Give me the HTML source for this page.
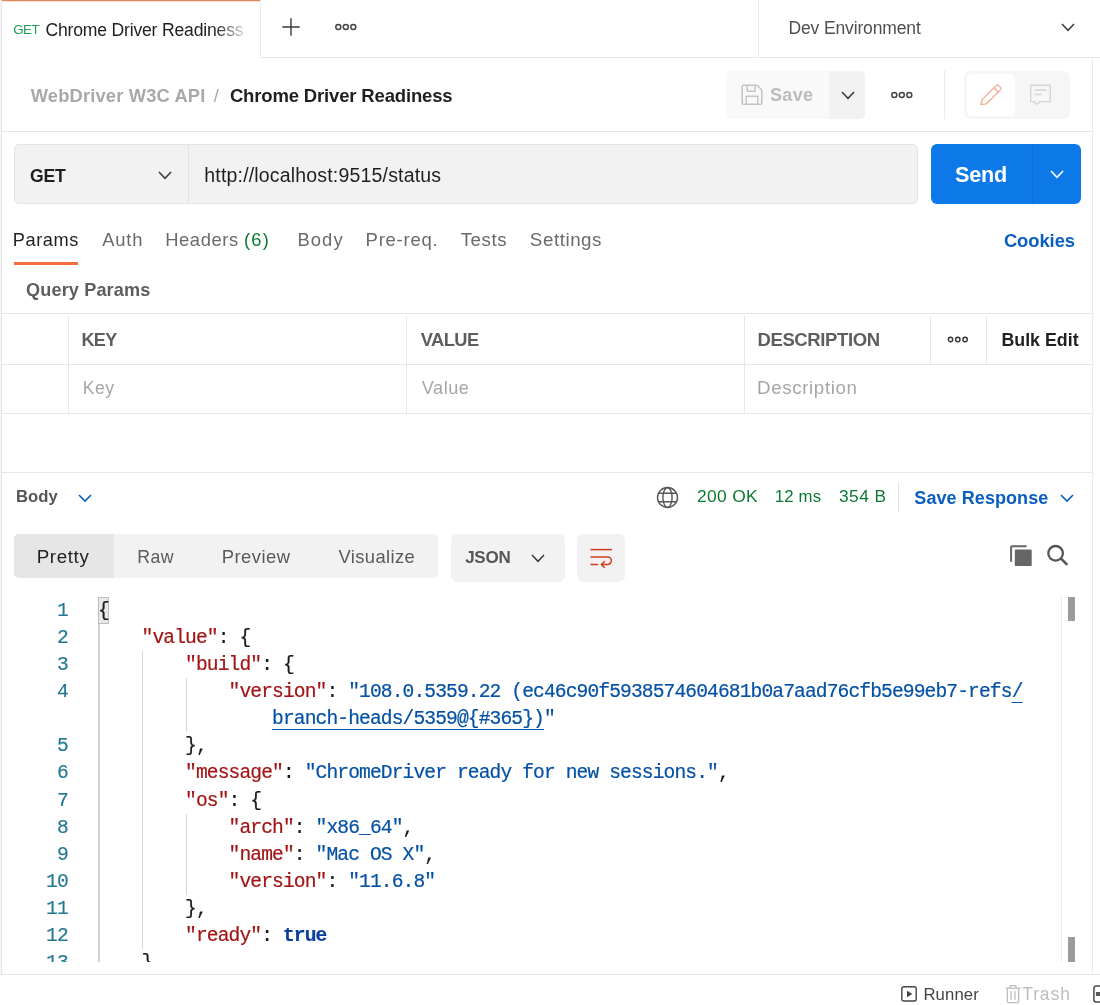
<!DOCTYPE html>
<html>
<head>
<meta charset="utf-8">
<title>Postman - Chrome Driver Readiness</title>
<style>
html,body{margin:0;padding:0;background:#fff}
body{width:1100px;height:1005px;position:relative;overflow:hidden;will-change:transform;font-family:"Liberation Sans",sans-serif;color:#212121}
.a{position:absolute}
.t{position:absolute;white-space:nowrap;line-height:1}
.ln_h{background:#e8e8e8}
.h{position:absolute;height:1px;background:#e7e7e7}
.v{position:absolute;width:1px;background:#e7e7e7}
svg{position:absolute;overflow:visible}
#code{position:absolute;left:0;top:596px;width:1092px;height:366px;overflow:hidden;font-family:"Liberation Mono",monospace;font-size:19.6px;letter-spacing:-0.882px;line-height:27.15px}
.cl{position:absolute;left:98px;-webkit-text-stroke:0.2px;margin-top:1.5px;white-space:pre;height:27.15px;color:#1a1a1a}
.ln{position:absolute;left:20px;-webkit-text-stroke:0.15px;margin-top:1.5px;width:47.8px;text-align:right;color:#237893;height:27.15px}
.k{color:#a31515}
.s{color:#0451a5}
.u{color:#0451a5;text-decoration:underline;text-underline-offset:5.2px;text-decoration-thickness:1.3px}
.b{color:#0b3f9e;font-weight:bold}
.g{position:absolute;width:1px;background:#d6d6d6}
</style>
</head>
<body>

<!-- ===== frame lines ===== -->
<div class="a" style="left:0;top:0;width:1px;height:975px;background:#f4f4f4"></div>
<div class="v" style="left:1px;top:0;height:975px;background:#e6e6e6"></div>
<div class="a" style="left:2px;top:0;width:258px;height:1px;background:#e2855c"></div>
<div class="a" style="left:2px;top:1px;width:258px;height:1px;background:#fbe0d4"></div>
<div class="v" style="left:260px;top:0;height:58px"></div>
<div class="h" style="left:260px;top:57px;width:840px"></div>
<div class="v" style="left:758px;top:0;height:57px"></div>
<div class="v" style="left:1092px;top:58px;height:916px;background:#ececec"></div>
<div class="h" style="left:2px;top:131px;width:1091px"></div>
<div class="h" style="left:2px;top:313px;width:1091px"></div>
<div class="h" style="left:2px;top:364px;width:1091px"></div>
<div class="h" style="left:2px;top:413px;width:1091px"></div>
<div class="v" style="left:68px;top:316px;height:97px"></div>
<div class="v" style="left:406px;top:316px;height:97px"></div>
<div class="v" style="left:744px;top:316px;height:97px"></div>
<div class="v" style="left:930px;top:316px;height:48px"></div>
<div class="v" style="left:986px;top:316px;height:48px"></div>
<div class="h" style="left:2px;top:472px;width:1091px"></div>
<div class="h" style="left:0;top:974px;width:1100px"></div>

<!-- ===== tab bar ===== -->
<!--TABFADE-->
<svg style="left:282px;top:18px" width="18" height="18" viewBox="0 0 18 18"><path d="M9 0.3V17.7M0.3 9H17.7" stroke="#3a3a3a" stroke-width="1.4" fill="none"/></svg>
<svg style="left:334px;top:22px" width="24" height="10" viewBox="0 0 24 10"><g fill="none" stroke="#444" stroke-width="1.5"><circle cx="4.3" cy="5" r="2.5"/><circle cx="11.8" cy="5" r="2.5"/><circle cx="19.3" cy="5" r="2.5"/></g></svg>
<svg style="left:1061px;top:23px" width="14" height="9" viewBox="0 0 14 9"><path d="M1 1L7 7.3L13 1" stroke="#3a3a3a" stroke-width="1.5" fill="none"/></svg>

<!-- ===== breadcrumb row ===== -->
<div class="a" style="left:726px;top:71px;width:103px;height:48px;background:#f9f9f9;border-radius:5px 0 0 5px"></div>
<div class="a" style="left:829px;top:71px;width:36px;height:48px;background:#f2f2f2;border-radius:0 5px 5px 0"></div>
<svg style="left:741px;top:84px" width="22" height="22" viewBox="0 0 22 22"><g fill="none" stroke="#c4c4c4" stroke-width="1.5" stroke-linejoin="round"><path d="M2.5 1.2H16L20.8 6V19a1.3 1.3 0 0 1-1.3 1.3H2.5A1.3 1.3 0 0 1 1.2 19V2.5A1.3 1.3 0 0 1 2.5 1.2Z"/><path d="M6.2 1.5V7.2H14V1.5"/><path d="M5.2 20V12.2H16.8V20"/></g></svg>
<svg style="left:841px;top:91px" width="14" height="9" viewBox="0 0 14 9"><path d="M1 1L7 7.3L13 1" stroke="#3a3a3a" stroke-width="1.5" fill="none"/></svg>
<svg style="left:890px;top:89.5px" width="24" height="10" viewBox="0 0 24 10"><g fill="none" stroke="#444" stroke-width="1.5"><circle cx="4.3" cy="5" r="2.5"/><circle cx="11.8" cy="5" r="2.5"/><circle cx="19.3" cy="5" r="2.5"/></g></svg>
<div class="v" style="left:944px;top:70px;height:49px;background:#ececec"></div>
<div class="a" style="left:964px;top:71px;width:106px;height:48px;background:#f6f6f6;border-radius:6px"></div>
<div class="a" style="left:967px;top:74px;width:48px;height:42px;background:#fff;border-radius:5px"></div>
<svg style="left:979px;top:83px" width="24" height="24" viewBox="0 0 24 24"><g fill="none" stroke="#f2ab91" stroke-width="1.3" stroke-linejoin="round" stroke-linecap="round"><path d="M2 21.5L3.2 16.6L17.4 2.4a1.4 1.4 0 0 1 2 0l2.2 2.2a1.4 1.4 0 0 1 0 2L7.4 20.8Z"/><path d="M15 4.8L19.2 9"/></g></svg>
<svg style="left:1029px;top:83px" width="24" height="24" viewBox="0 0 24 24"><g fill="none" stroke="#d6d6d6" stroke-width="1.4" stroke-linejoin="round"><path d="M1.7 2.2H21.3V18.6H11.2L8 21.3L4.8 18.6H1.7Z"/><path d="M5.5 7H17.5M5.5 11.5H12.5"/></g></svg>

<!-- ===== URL row ===== -->
<div class="a" style="left:14px;top:144px;width:903px;height:59px;background:#f2f2f2;border:1px solid #e4e4e4;border-radius:5px;box-sizing:content-box;width:902px;height:58px"></div>
<div class="v" style="left:188px;top:145px;height:58px;background:#e2e2e2"></div>
<svg style="left:158px;top:170.5px" width="14" height="9" viewBox="0 0 14 9"><path d="M1 1L7 7.3L13 1" stroke="#3a3a3a" stroke-width="1.5" fill="none"/></svg>
<div class="a" style="left:931px;top:144px;width:150px;height:60px;background:#0d79e9;border-radius:6px"></div>
<div class="v" style="left:1032px;top:144px;height:60px;background:#0b70da"></div>
<svg style="left:1049.8px;top:170.4px" width="14" height="9" viewBox="0 0 14 9"><path d="M1 1L7 7.3L13 1" stroke="#fff" stroke-width="1.6" fill="none"/></svg>

<!-- ===== request tabs ===== -->
<div class="a" style="left:14px;top:262px;width:64px;height:3px;background:#f26b3a"></div>

<!-- table ooo -->
<svg style="left:947px;top:335px" width="22" height="9" viewBox="0 0 22 9"><g fill="none" stroke="#333" stroke-width="1.4"><circle cx="3.5" cy="4.5" r="2.2"/><circle cx="10.8" cy="4.5" r="2.2"/><circle cx="18.1" cy="4.5" r="2.2"/></g></svg>

<!-- ===== response header ===== -->
<svg style="left:77.9px;top:493.8px" width="14" height="9" viewBox="0 0 14 9"><path d="M1 1L7 7L13 1" stroke="#0a5ec2" stroke-width="1.6" fill="none"/></svg>
<svg style="left:656px;top:486px" width="23" height="23" viewBox="0 0 23 23"><g fill="none" stroke="#555" stroke-width="1.4"><circle cx="11.5" cy="11.5" r="10"/><ellipse cx="11.5" cy="11.5" rx="4.6" ry="10"/><path d="M2.6 7.3H20.4M2.6 15.7H20.4"/></g></svg>
<div class="v" style="left:898px;top:482px;height:30px;background:#e4e4e4"></div>
<svg style="left:1059.7px;top:493.5px" width="14" height="9" viewBox="0 0 14 9"><path d="M1 1L7 7L13 1" stroke="#0a5ec2" stroke-width="1.6" fill="none"/></svg>

<!-- ===== view tabs ===== -->
<div class="a" style="left:14px;top:534px;width:424px;height:44px;background:#f2f2f2;border-radius:5px"></div>
<div class="a" style="left:14px;top:534px;width:100px;height:44px;background:#e6e6e6;border-radius:5px 0 0 5px"></div>
<div class="a" style="left:451px;top:534px;width:114px;height:48px;background:#f2f2f2;border-radius:6px"></div>
<svg style="left:530.5px;top:554px" width="14" height="9" viewBox="0 0 14 9"><path d="M1 1L7 7.3L13 1" stroke="#3a3a3a" stroke-width="1.5" fill="none"/></svg>
<div class="a" style="left:577px;top:534px;width:48px;height:48px;background:#f2f2f2;border-radius:6px"></div>
<svg style="left:589px;top:547px" width="24" height="24" viewBox="0 0 24 24"><g fill="none" stroke="#d23c1e" stroke-width="1.5" stroke-linejoin="round"><path d="M1.5 2.6H23"/><path d="M1.5 10H18.6a3.75 3.75 0 0 1 0 7.5H12.5"/><path d="M1.5 17.5H9"/><path d="M15.8 14.2L12.3 17.5L15.8 20.8"/></g></svg>
<!-- copy -->
<svg style="left:1010px;top:544.5px" width="22" height="22" viewBox="0 0 22 22"><rect x="4.8" y="4.6" width="16.9" height="16.5" rx="1.2" fill="#666"/><path d="M16.6 1.3H2a.9.9 0 0 0-.9.9V16.8" stroke="#666" stroke-width="2" fill="none"/></svg>
<!-- search -->
<svg style="left:1046px;top:543.8px" width="23" height="22" viewBox="0 0 23 22"><circle cx="9.6" cy="9.3" r="7.3" fill="none" stroke="#555" stroke-width="2.3"/><path d="M15 14.6L20.6 20.2" stroke="#555" stroke-width="2.6" stroke-linecap="round"/></svg>

<!-- ===== code ===== -->
<div id="code">
<div class="a" style="left:98px;top:1px;width:10px;height:26px;background:#e9e9e9;border:1px solid #bdbdbd;box-sizing:content-box;width:9px;height:25px"></div>
<div class="g" style="left:98px;top:27.5px;height:340px;width:2px;background:#d2d2d2"></div>
<div class="g" style="left:142px;top:54.5px;height:298.5px"></div>
<div class="g" style="left:186px;top:82px;height:54px"></div>
<div class="g" style="left:186px;top:217.5px;height:81.5px"></div>
<div class="ln" style="top:0.00px">1</div>
<div class="cl" style="top:0.00px"><span class="p">{</span></div>
<div class="ln" style="top:27.15px">2</div>
<div class="cl" style="top:27.15px"><span class="p">    </span><span class="k">"value"</span><span class="p">: {</span></div>
<div class="ln" style="top:54.30px">3</div>
<div class="cl" style="top:54.30px"><span class="p">        </span><span class="k">"build"</span><span class="p">: {</span></div>
<div class="ln" style="top:81.45px">4</div>
<div class="cl" style="top:81.45px"><span class="p">            </span><span class="k">"version"</span><span class="p">: </span><span class="s">"108.0.5359.22 (ec46c90f5938574604681b0a7aad76cfb5e99eb7-refs</span><span class="u">/</span></div>
<div class="cl" style="top:108.60px"><span class="p">                </span><span class="u">branch-heads/5359@{#365})</span><span class="s">"</span></div>
<div class="ln" style="top:135.75px">5</div>
<div class="cl" style="top:135.75px"><span class="p">        },</span></div>
<div class="ln" style="top:162.90px">6</div>
<div class="cl" style="top:162.90px"><span class="p">        </span><span class="k">"message"</span><span class="p">: </span><span class="s">"ChromeDriver ready for new sessions."</span><span class="p">,</span></div>
<div class="ln" style="top:190.05px">7</div>
<div class="cl" style="top:190.05px"><span class="p">        </span><span class="k">"os"</span><span class="p">: {</span></div>
<div class="ln" style="top:217.20px">8</div>
<div class="cl" style="top:217.20px"><span class="p">            </span><span class="k">"arch"</span><span class="p">: </span><span class="s">"x86_64"</span><span class="p">,</span></div>
<div class="ln" style="top:244.35px">9</div>
<div class="cl" style="top:244.35px"><span class="p">            </span><span class="k">"name"</span><span class="p">: </span><span class="s">"Mac OS X"</span><span class="p">,</span></div>
<div class="ln" style="top:271.50px">10</div>
<div class="cl" style="top:271.50px"><span class="p">            </span><span class="k">"version"</span><span class="p">: </span><span class="s">"11.6.8"</span></div>
<div class="ln" style="top:298.65px">11</div>
<div class="cl" style="top:298.65px"><span class="p">        },</span></div>
<div class="ln" style="top:325.80px">12</div>
<div class="cl" style="top:325.80px"><span class="p">        </span><span class="k">"ready"</span><span class="p">: </span><span class="b">true</span></div>
<div class="ln" style="top:352.95px">13</div>
<div class="cl" style="top:352.95px"><span class="p">    }</span></div>
<div class="v" style="left:1061px;top:0;height:366px;background:#ededed"></div>
<div class="a" style="left:1068px;top:1px;width:7px;height:24px;background:#9b9b9b"></div>
<div class="a" style="left:1068px;top:341px;width:7px;height:25px;background:#9b9b9b"></div>
</div>

<!-- ===== bottom bar ===== -->
<svg style="left:900.5px;top:986px" width="16" height="16" viewBox="0 0 16 16"><rect x="0.8" y="0.8" width="14.4" height="14.2" rx="2" fill="none" stroke="#444" stroke-width="1.4"/><path d="M6 4.8V11.2L11.3 8Z" fill="#444"/></svg>
<svg style="left:1004.5px;top:984.5px" width="16" height="19" viewBox="0 0 16 19"><g fill="none" stroke="#bdbdbd" stroke-width="1.3"><path d="M0.5 3.2H15.5"/><path d="M5 3V1.3a.6.6 0 0 1 .6-.6h4.8a.6.6 0 0 1 .6.6V3"/><path d="M2.3 3.4V16.3a1.4 1.4 0 0 0 1.4 1.4h8.6a1.4 1.4 0 0 0 1.4-1.4V3.4"/><path d="M6 6.2V14.8M10 6.2V14.8"/></g></svg>
<svg style="left:1093.2px;top:985px" width="10" height="18" viewBox="0 0 10 18"><rect x="0.9" y="0.9" width="16" height="16" rx="2.2" fill="none" stroke="#4a4a4a" stroke-width="1.5"/><rect x="2.9" y="7" width="8" height="4" fill="#5a5a5a"/></svg>

<!-- ===== text ===== -->
<span class="t" id="t0" style="left:13.20px;top:23.00px;font-size:13.3px;letter-spacing:-0.494px;color:#1f9d55;">GET</span>
<span class="t" id="t1" style="left:30.75px;top:87.00px;font-size:18.3px;letter-spacing:0.177px;color:#a8a8a8;font-weight:bold;">WebDriver W3C API</span>
<span class="t" id="t2" style="left:213.76px;top:87.00px;font-size:18.2px;letter-spacing:0.000px;color:#a8a8a8;">/</span>
<span class="t" id="t3" style="left:229.89px;top:87.00px;font-size:18.5px;letter-spacing:-0.159px;color:#1f1f1f;font-weight:bold;">Chrome Driver Readiness</span>
<span class="t" id="t4" style="left:788.46px;top:20.00px;font-size:17.5px;letter-spacing:-0.134px;color:#4f4f4f;">Dev Environment</span>
<span class="t" id="t5" style="left:769.92px;top:86.00px;font-size:18.0px;letter-spacing:0.388px;color:#bcbcbc;font-weight:bold;">Save</span>
<span class="t" id="t6" style="left:29.94px;top:168.00px;font-size:17.6px;letter-spacing:-0.165px;color:#1f1f1f;font-weight:bold;">GET</span>
<span class="t" id="t7" style="left:204.34px;top:166.00px;font-size:19.5px;letter-spacing:0.175px;color:#1f1f1f;">http://localhost:9515/status</span>
<span class="t" id="t8" style="left:955.04px;top:164.00px;font-size:21.6px;letter-spacing:-0.204px;color:#ffffff;font-weight:bold;">Send</span>
<span class="t" id="t9" style="left:12.83px;top:231.00px;font-size:18.2px;letter-spacing:0.569px;color:#1f1f1f;">Params</span>
<span class="t" id="t10" style="left:102.24px;top:231.00px;font-size:18.4px;letter-spacing:0.783px;color:#6a6a6a;">Auth</span>
<span class="t" id="t11" style="left:165.25px;top:231.00px;font-size:18.4px;letter-spacing:0.556px;color:#6a6a6a;">Headers</span>
<span class="t" id="t12" style="left:243.90px;top:231.00px;font-size:18.3px;letter-spacing:1.341px;color:#0d7a31;">(6)</span>
<span class="t" id="t13" style="left:297.56px;top:231.00px;font-size:18.4px;letter-spacing:1.038px;color:#6a6a6a;">Body</span>
<span class="t" id="t14" style="left:365.55px;top:231.00px;font-size:18.5px;letter-spacing:0.749px;color:#6a6a6a;">Pre-req.</span>
<span class="t" id="t15" style="left:460.73px;top:231.00px;font-size:18.7px;letter-spacing:0.551px;color:#6a6a6a;">Tests</span>
<span class="t" id="t16" style="left:529.87px;top:231.00px;font-size:18.8px;letter-spacing:0.539px;color:#6a6a6a;">Settings</span>
<span class="t" id="t17" style="left:1003.90px;top:232.00px;font-size:18.4px;letter-spacing:-0.063px;color:#0a5ec2;font-weight:bold;">Cookies</span>
<span class="t" id="t18" style="left:26.11px;top:281.00px;font-size:18.1px;letter-spacing:0.131px;color:#5e5e5e;font-weight:bold;">Query Params</span>
<span class="t" id="t19" style="left:81.39px;top:331.00px;font-size:18.0px;letter-spacing:-0.520px;color:#5e5e5e;font-weight:bold;">KEY</span>
<span class="t" id="t20" style="left:420.77px;top:331.00px;font-size:18.3px;letter-spacing:-0.569px;color:#5e5e5e;font-weight:bold;">VALUE</span>
<span class="t" id="t21" style="left:757.43px;top:331.00px;font-size:18.5px;letter-spacing:-0.373px;color:#5e5e5e;font-weight:bold;">DESCRIPTION</span>
<span class="t" id="t22" style="left:1001.44px;top:332.00px;font-size:17.8px;letter-spacing:0.007px;color:#1f1f1f;font-weight:bold;">Bulk Edit</span>
<span class="t" id="t23" style="left:82.74px;top:380.00px;font-size:17.6px;letter-spacing:0.440px;color:#a6a6a6;">Key</span>
<span class="t" id="t24" style="left:421.76px;top:379.00px;font-size:18.2px;letter-spacing:0.499px;color:#a6a6a6;">Value</span>
<span class="t" id="t25" style="left:757.03px;top:379.00px;font-size:18.7px;letter-spacing:0.646px;color:#a6a6a6;">Description</span>
<span class="t" id="t26" style="left:16.00px;top:489.00px;font-size:16.7px;letter-spacing:-0.017px;color:#555;font-weight:bold;">Body</span>
<span class="t" id="t27" style="left:696.96px;top:488.00px;font-size:17.4px;letter-spacing:0.339px;color:#0d7a31;">200 OK</span>
<span class="t" id="t28" style="left:774.79px;top:489.00px;font-size:16.8px;letter-spacing:0.157px;color:#0d7a31;">12 ms</span>
<span class="t" id="t29" style="left:838.96px;top:488.00px;font-size:17.4px;letter-spacing:0.432px;color:#0d7a31;">354 B</span>
<span class="t" id="t30" style="left:914.32px;top:489.00px;font-size:18.0px;letter-spacing:0.075px;color:#0a5ec2;font-weight:bold;">Save Response</span>
<span class="t" id="t31" style="left:36.67px;top:548.00px;font-size:18.8px;letter-spacing:0.620px;color:#1f1f1f;">Pretty</span>
<span class="t" id="t32" style="left:137.29px;top:549.00px;font-size:17.7px;letter-spacing:0.396px;color:#5a5a5a;">Raw</span>
<span class="t" id="t33" style="left:221.70px;top:548.00px;font-size:18.4px;letter-spacing:0.487px;color:#5a5a5a;">Preview</span>
<span class="t" id="t34" style="left:338.55px;top:548.00px;font-size:18.4px;letter-spacing:0.361px;color:#5a5a5a;">Visualize</span>
<span class="t" id="t35" style="left:465.18px;top:549.00px;font-size:17.0px;letter-spacing:-0.256px;color:#555;font-weight:bold;">JSON</span>
<span class="t" id="t36" style="left:923.40px;top:987.00px;font-size:16.7px;letter-spacing:0.135px;color:#444;">Runner</span>
<span class="t" id="t37" style="left:1022.20px;top:986.00px;font-size:17.5px;letter-spacing:0.906px;color:#bdbdbd;">Trash</span>
<span class="t" id="t38" style="left:45.43px;top:22.00px;font-size:17.6px;letter-spacing:-0.194px;color:#1f1f1f;">Chrome Driver Readiness</span>
<div class="a" style="left:214px;top:14px;width:45px;height:30px;background:linear-gradient(to right,rgba(255,255,255,0) 0%,rgba(255,255,255,0.55) 45%,rgba(255,255,255,0.9) 75%,#fff 100%)"></div>

</body>
</html>
